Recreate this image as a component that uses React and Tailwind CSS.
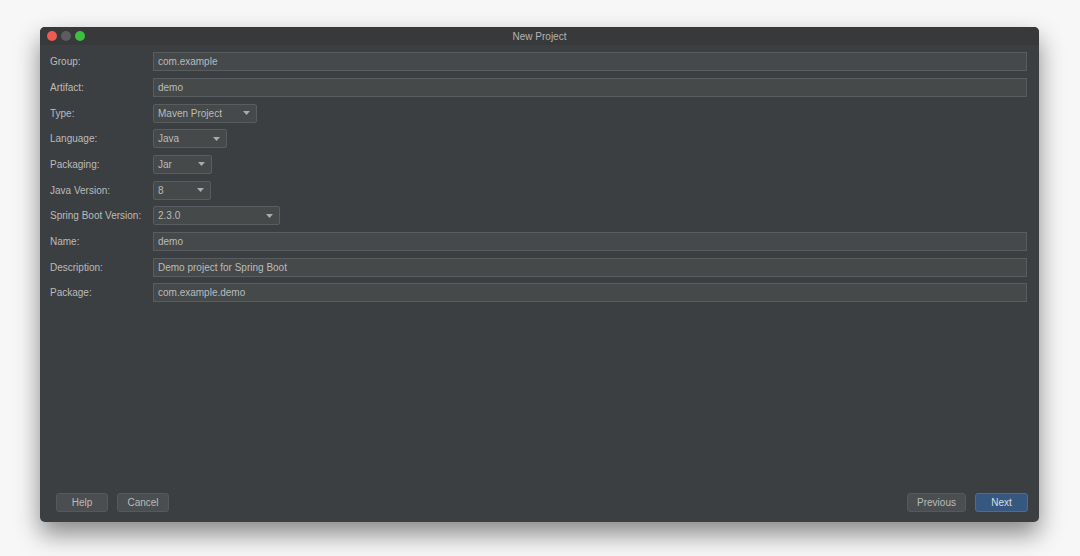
import React from "react";

const font = { fontFamily: '"Liberation Sans", Arial, sans-serif' };

function Arrow() {
  return (
    <svg width="7" height="4" viewBox="0 0 7 4" className="shrink-0">
      <path d="M0 0 L7 0 L3.5 4 Z" fill="#a9abad" />
    </svg>
  );
}

function Field({ value }) {
  return (
    <div className="flex-1 h-[19px] bg-[#45494a] border border-[#5a5d5f] flex items-center pl-[4px] text-[#bbbbbb]">
      {value}
    </div>
  );
}

function Select({ value, width }) {
  return (
    <div
      className={`h-[19px] bg-[#45494a] border border-[#5a5d5f] flex items-center justify-between pl-[4px] pr-[6px] text-[#bbbbbb] rounded-[2px] ${width}`}
    >
      <span>{value}</span>
      <Arrow />
    </div>
  );
}

function Row({ label, children }) {
  return (
    <div className="h-[25.67px] flex items-center">
      <div className="w-[103px] shrink-0 text-[#bbbbbb]">{label}</div>
      {children}
    </div>
  );
}

function Btn({ children, primary, width }) {
  return (
    <div
      className={`h-[19px] flex items-center justify-center rounded-[3px] border ${width} ${
        primary
          ? "bg-[#365880] border-[#4a6e93] text-[#d6dde6]"
          : "bg-[#4a4e50] border-[#56595b] text-[#bbbbbb]"
      }`}
    >
      {children}
    </div>
  );
}

export default function App() {
  return (
    <div className="w-[1080px] h-[556px] bg-[#f7f7f7] pt-[27px] pl-[40px] overflow-hidden" style={font}>
      <div className="w-[999px] h-[495px] bg-[#3c3f41] rounded-[5px] flex flex-col text-[10px] shadow-[0_12px_24px_rgba(0,0,0,0.45)] overflow-hidden">
        <div className="h-[18px] bg-[#38393b] flex items-center relative shrink-0">
          <div className="flex items-center gap-[4px] pl-[7px]">
            <div className="w-[10px] h-[10px] rounded-full bg-[#ed5a52]" />
            <div className="w-[10px] h-[10px] rounded-full bg-[#5b5d5f]" />
            <div className="w-[10px] h-[10px] rounded-full bg-[#3dc03f]" />
          </div>
          <div className="absolute inset-0 flex items-center justify-center text-[#b5b5b5] text-[10px]">
            New Project
          </div>
        </div>
        <div className="flex-1 flex flex-col pt-[4px] pl-[10px] pr-[12px]">
          <Row label="Group:"><Field value="com.example" /></Row>
          <Row label="Artifact:"><Field value="demo" /></Row>
          <Row label="Type:"><Select value="Maven Project" width="w-[104px]" /></Row>
          <Row label="Language:"><Select value="Java" width="w-[74px]" /></Row>
          <Row label="Packaging:"><Select value="Jar" width="w-[59px]" /></Row>
          <Row label="Java Version:"><Select value="8" width="w-[58px]" /></Row>
          <Row label="Spring Boot Version:"><Select value="2.3.0" width="w-[127px]" /></Row>
          <Row label="Name:"><Field value="demo" /></Row>
          <Row label="Description:"><Field value="Demo project for Spring Boot" /></Row>
          <Row label="Package:"><Field value="com.example.demo" /></Row>
        </div>
        <div className="flex items-center justify-between pl-[16px] pr-[11px] pb-[10px]">
          <div className="flex gap-[9px]">
            <Btn width="w-[52px]">Help</Btn>
            <Btn width="w-[52px]">Cancel</Btn>
          </div>
          <div className="flex gap-[9px]">
            <Btn width="w-[59px]">Previous</Btn>
            <Btn width="w-[53px]" primary>Next</Btn>
          </div>
        </div>
      </div>
    </div>
  );
}
